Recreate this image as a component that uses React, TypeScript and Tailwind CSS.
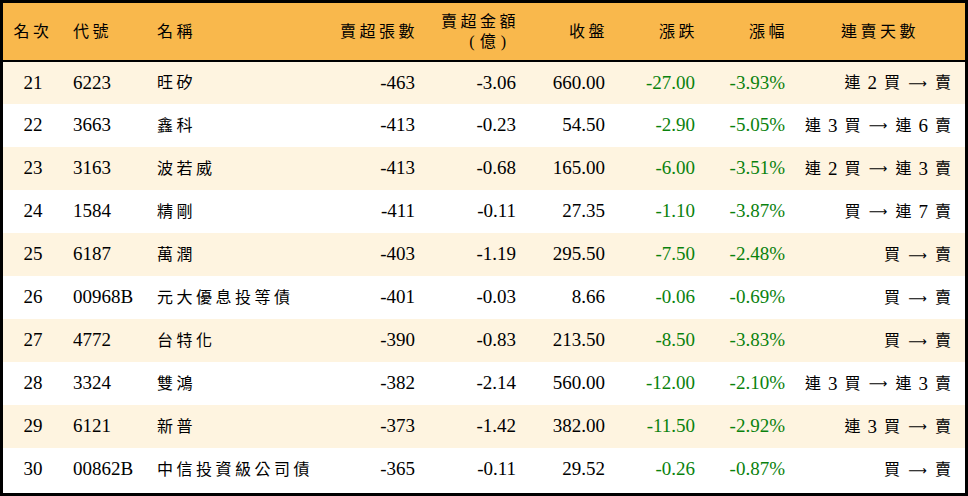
import React from 'react'

// 賣超排行 — 第 21 ~ 30 名
type Row = {
  rank: number
  code: string
  name: string
  lots: string
  amount: string
  close: string
  change: string
  pct: string
  streak: string
}

const ROWS: Row[] = [
  { rank: 21, code: '6223', name: '旺矽', lots: '-463', amount: '-3.06', close: '660.00', change: '-27.00', pct: '-3.93%', streak: '連 2 買 → 賣' },
  { rank: 22, code: '3663', name: '鑫科', lots: '-413', amount: '-0.23', close: '54.50', change: '-2.90', pct: '-5.05%', streak: '連 3 買 → 連 6 賣' },
  { rank: 23, code: '3163', name: '波若威', lots: '-413', amount: '-0.68', close: '165.00', change: '-6.00', pct: '-3.51%', streak: '連 2 買 → 連 3 賣' },
  { rank: 24, code: '1584', name: '精剛', lots: '-411', amount: '-0.11', close: '27.35', change: '-1.10', pct: '-3.87%', streak: '買 → 連 7 賣' },
  { rank: 25, code: '6187', name: '萬潤', lots: '-403', amount: '-1.19', close: '295.50', change: '-7.50', pct: '-2.48%', streak: '買 → 賣' },
  { rank: 26, code: '00968B', name: '元大優息投等債', lots: '-401', amount: '-0.03', close: '8.66', change: '-0.06', pct: '-0.69%', streak: '買 → 賣' },
  { rank: 27, code: '4772', name: '台特化', lots: '-390', amount: '-0.83', close: '213.50', change: '-8.50', pct: '-3.83%', streak: '買 → 賣' },
  { rank: 28, code: '3324', name: '雙鴻', lots: '-382', amount: '-2.14', close: '560.00', change: '-12.00', pct: '-2.10%', streak: '連 3 買 → 連 3 賣' },
  { rank: 29, code: '6121', name: '新普', lots: '-373', amount: '-1.42', close: '382.00', change: '-11.50', pct: '-2.92%', streak: '連 3 買 → 賣' },
  { rank: 30, code: '00862B', name: '中信投資級公司債', lots: '-365', amount: '-0.11', close: '29.52', change: '-0.26', pct: '-0.87%', streak: '買 → 賣' },
]

const cjk = 'text-[16px] tracking-[3.5px]'

function Streak({ text }: { text: string }) {
  return (
    <span className="inline-flex items-center justify-end gap-[7px] whitespace-nowrap">
      {text.split(' ').map((t, i) =>
        t === '→' ? (
          <span key={i} className="font-['DejaVu_Sans',sans-serif] text-[13px] leading-none inline-block w-[21px] text-center">⟶</span>
        ) : /\d/.test(t) ? (
          <span key={i} className="text-[19px]">{t}</span>
        ) : (
          <span key={i} className="text-[16px]">{t}</span>
        )
      )}
    </span>
  )
}

export default function App() {
  return (
    <div className="w-[968px] h-[496px] bg-white font-['Liberation_Serif','Noto_Sans_CJK_TC',serif] text-black">
      <div className="border-[3px] border-black h-full overflow-hidden">
        <table className="w-full table-fixed border-collapse">
          <colgroup>
            <col className="w-[57px]" />
            <col className="w-[85px]" />
            <col className="w-[185px]" />
            <col className="w-[95px]" />
            <col className="w-[101px]" />
            <col className="w-[89px]" />
            <col className="w-[90px]" />
            <col className="w-[90px]" />
            <col />
          </colgroup>
          <thead>
            <tr className={`h-[58px] bg-[#f9b84c] border-b-2 border-black ${cjk}`}>
              <th className="font-normal text-center pl-[3px]">名次</th>
              <th className="font-normal text-left pl-[13px]">代號</th>
              <th className="font-normal text-left pl-[12px]">名稱</th>
              <th className="font-normal text-right pr-[7px]">賣超張數</th>
              <th className="font-normal text-right pr-[7px] leading-[20px]">
                <div>賣超金額</div>
                <div className="flex justify-end gap-[5px] pr-[13px] tracking-normal">
                  <span>(</span>
                  <span>億</span>
                  <span>)</span>
                </div>
              </th>
              <th className="font-normal text-right pr-[7px]">收盤</th>
              <th className="font-normal text-right pr-[7px]">漲跌</th>
              <th className="font-normal text-right pr-[7px]">漲幅</th>
              <th className="font-normal text-center">連賣天數</th>
            </tr>
          </thead>
          <tbody className="text-[19px]">
            {ROWS.map((r, i) => (
              <tr key={r.rank} className={`h-[43px] ${i % 2 === 0 ? 'bg-[#fef4e0]' : 'bg-white'}`}>
                <td className="text-center pl-[3px]">{r.rank}</td>
                <td className="text-left pl-[13px]">{r.code}</td>
                <td className={`text-left pl-[12px] ${cjk}`}>{r.name}</td>
                <td className="text-right pr-[10px]">{r.lots}</td>
                <td className="text-right pr-[10px]">{r.amount}</td>
                <td className="text-right pr-[10px]">{r.close}</td>
                <td className="text-right pr-[10px] text-[#0a820d]">{r.change}</td>
                <td className="text-right pr-[10px] text-[#0a820d]">{r.pct}</td>
                <td className="text-right pr-[14px]">
                  <Streak text={r.streak} />
                </td>
              </tr>
            ))}
          </tbody>
        </table>
      </div>
    </div>
  )
}
